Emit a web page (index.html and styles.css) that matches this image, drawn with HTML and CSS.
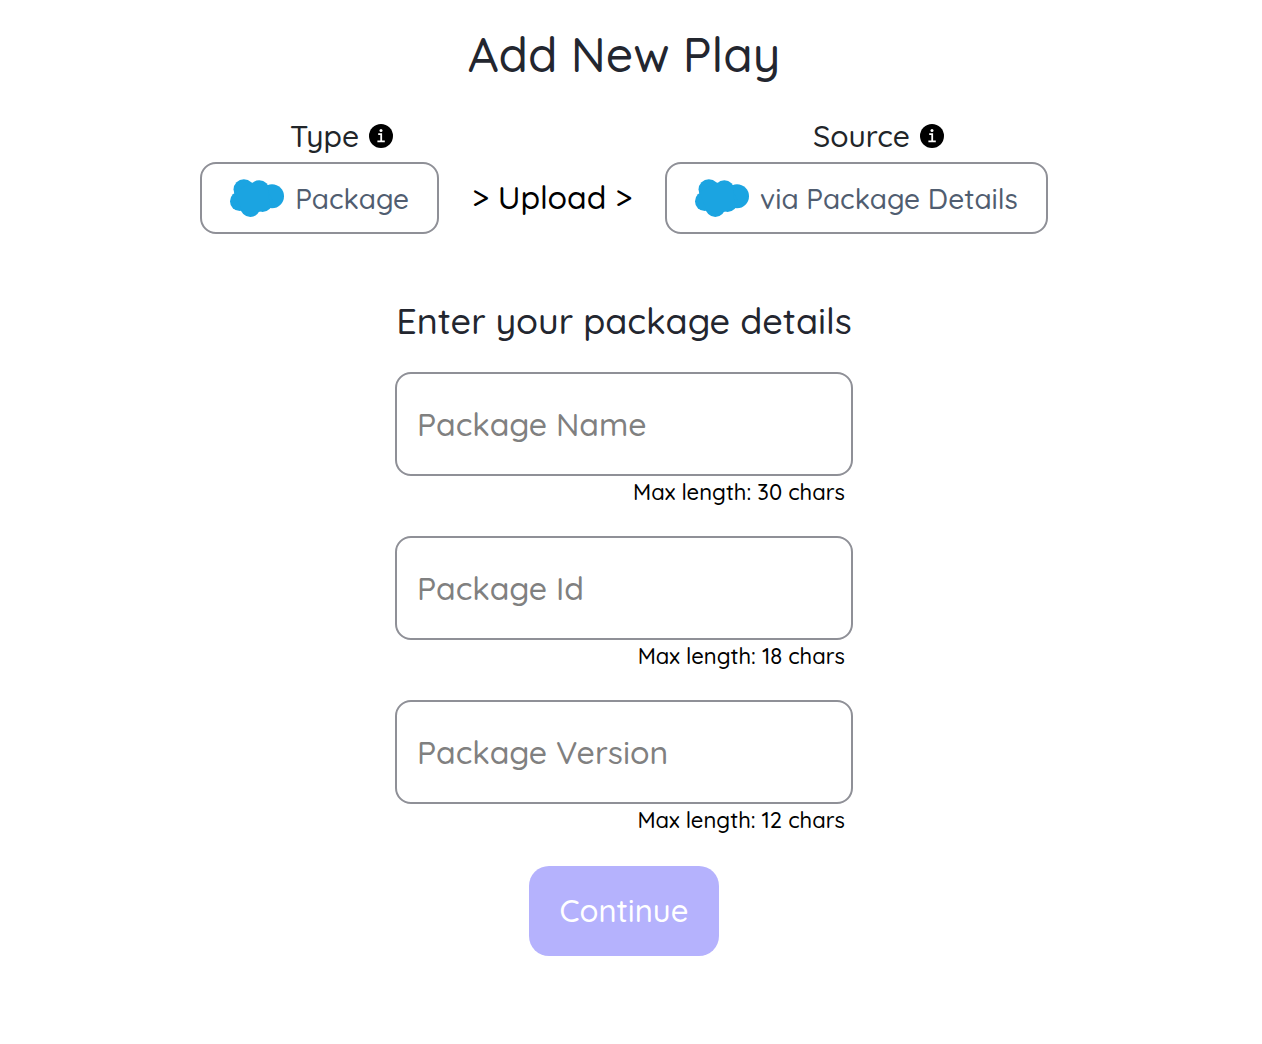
FILE: index.html
```html
<!DOCTYPE html>
<html lang="en">
<head>
<meta charset="utf-8">
<meta name="viewport" content="width=device-width, initial-scale=1">
<title>Add New Play</title>
<link rel="stylesheet" href="styles.css">
</head>
<body>
<svg class="sprite" aria-hidden="true">
  <symbol id="cloud" viewBox="0 0 54 38">
    <circle cx="13.9" cy="10.6" r="10.4"/>
    <circle cx="29.3" cy="11.4" r="10.2"/>
    <circle cx="42" cy="17.2" r="12"/>
    <circle cx="9.8" cy="22.2" r="9.8"/>
    <circle cx="20.3" cy="27.9" r="10"/>
    <circle cx="32.5" cy="23" r="10"/>
    <path d="M22 3.8L37.5 6.2L40 29L28.5 33L11.7 31.8L4.2 13z"/>
  </symbol>
  <symbol id="info" viewBox="0 0 24 24">
    <circle cx="12" cy="12" r="12"/>
    <circle cx="12" cy="6.6" r="1.5" fill="#fff"/>
    <path d="M9.2 10.2h3v7M8.4 17.3h7.4" fill="none" stroke="#fff" stroke-width="1.8"/>
  </symbol>
</svg>
<main class="page">
  <h1 class="title">Add New Play</h1>
  <div class="steps">
    <section class="step">
      <h2 class="step-label">Type <svg class="info"><use href="#info"/></svg></h2>
      <button class="choice" type="button"><svg class="cloud"><use href="#cloud"/></svg>Package</button>
    </section>
    <p class="upload">&gt; Upload &gt;</p>
    <section class="step">
      <h2 class="step-label">Source <svg class="info"><use href="#info"/></svg></h2>
      <button class="choice" type="button"><svg class="cloud"><use href="#cloud"/></svg>via Package Details</button>
    </section>
  </div>
  <form class="details">
    <h2 class="form-title">Enter your package details</h2>
    <div class="field">
      <input class="input" type="text" maxlength="30" placeholder="Package Name" aria-label="Package Name" aria-describedby="name-hint">
      <p class="hint" id="name-hint">Max length: 30 chars</p>
    </div>
    <div class="field">
      <input class="input" type="text" maxlength="18" placeholder="Package Id" aria-label="Package Id" aria-describedby="id-hint">
      <p class="hint" id="id-hint">Max length: 18 chars</p>
    </div>
    <div class="field">
      <input class="input" type="text" maxlength="12" placeholder="Package Version" aria-label="Package Version" aria-describedby="version-hint">
      <p class="hint" id="version-hint">Max length: 12 chars</p>
    </div>
    <button class="continue" type="submit" disabled>Continue</button>
  </form>
</main>
</body>
</html>
```
FILE: styles.css
```css
* { box-sizing: border-box; }
body {
  margin: 0;
  background: #fff;
  color: #000;
  font-family: Quicksand, Lato, sans-serif;
  font-weight: 500;
}
h1, h2, p { margin: 0; font-weight: 500; }
button, input { font: inherit; }
.sprite { display: none; }
.page {
  display: flex;
  flex-direction: column;
  align-items: center;
  padding: 24px 14px 24px 0;
}
.title { font-size: 48px; line-height: 60px; color: #23262f; }
.steps {
  display: flex;
  flex-wrap: wrap;
  justify-content: center;
  align-items: flex-end;
  gap: 33px;
  margin-top: 32px;
}
.step { display: flex; flex-direction: column; align-items: center; gap: 6px; }
.step-label {
  display: flex;
  align-items: center;
  gap: 10px;
  padding-left: 44px;
  font-size: 30px;
  line-height: 40px;
  color: #212529;
}
.info { width: 24px; height: 24px; fill: #000; }
.choice {
  display: flex;
  align-items: center;
  gap: 11px;
  height: 72px;
  padding: 0 28px;
  border: 2px solid #8f9097;
  border-radius: 16px;
  background: #fff;
  color: #505d70;
  font-size: 28px;
}
.cloud { width: 54px; height: 38px; fill: #1ba4e1; }
.upload { font-size: 32px; line-height: 70px; padding-bottom: 2px; }
.details {
  display: flex;
  flex-direction: column;
  align-items: center;
  width: 458px;
  max-width: 100%;
  margin-top: 63px;
}
.form-title { font-size: 36px; line-height: 48px; margin-bottom: 27px; color: #23262f; white-space: nowrap; }
.field { width: 100%; margin-bottom: 28px; }
.input {
  display: block;
  width: 100%;
  height: 104px;
  padding: 0 20px;
  border: 2px solid #8f9097;
  border-radius: 16px;
  background: #fff;
  font-size: 32px;
}
.input::placeholder { color: #808080; opacity: 1; }
.hint { padding-right: 8px; text-align: right; font-size: 22px; line-height: 32px; }
.continue {
  height: 90px;
  margin-top: 2px;
  padding: 0 31px 2px;
  border: 0;
  border-radius: 20px;
  background: #b5b2fd;
  color: #fff;
  font-size: 31px;
}
```
